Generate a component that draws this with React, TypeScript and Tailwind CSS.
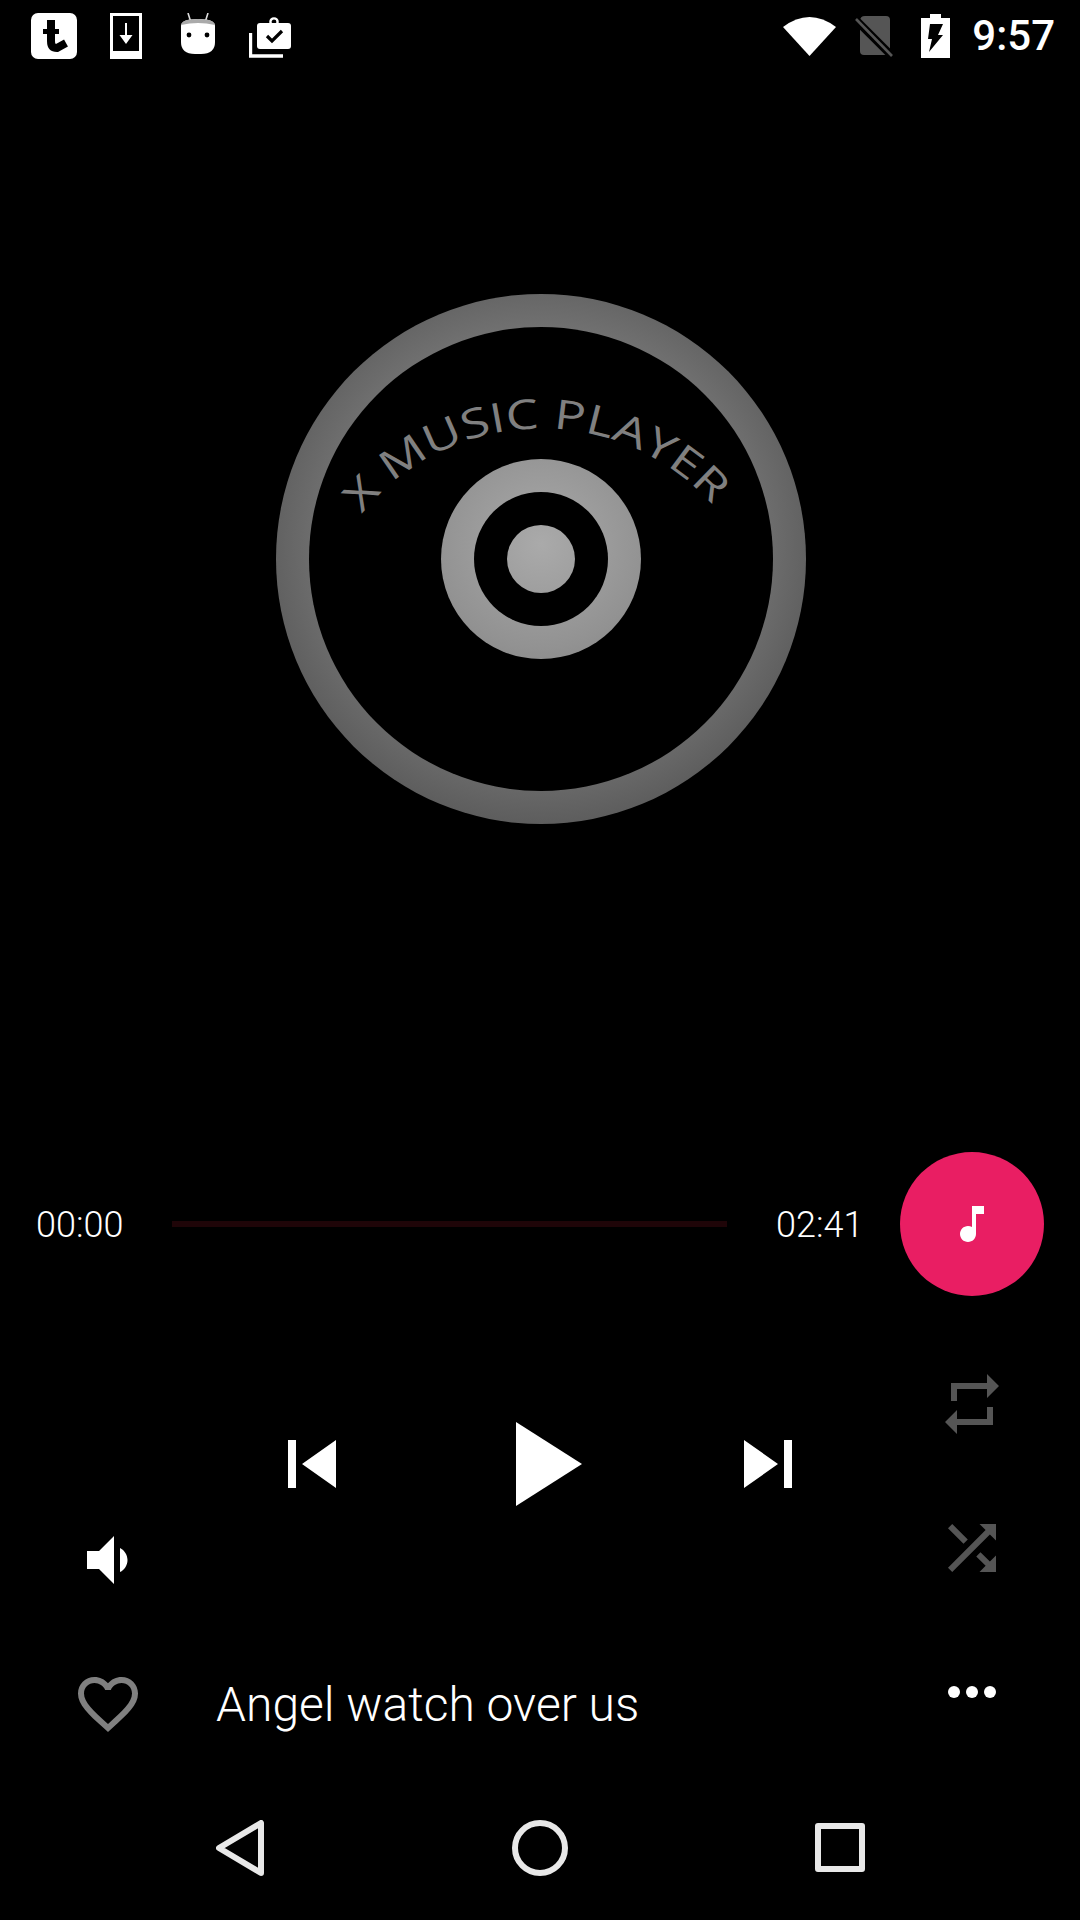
const roboto = "font-['Roboto',sans-serif]";

function MaterialIcon({ d, size, className }: { d: string; size: number; className: string }) {
  return (
    <svg viewBox="0 0 24 24" width={size} height={size} className={`shrink-0 ${className}`}>
      <path d={d} fill="currentColor" />
    </svg>
  );
}

function StatusBar() {
  return (
    <div className="flex h-[72px] w-full items-start">
      <svg viewBox="0 0 46 46" width={46} height={46} className="ml-[31px] mt-[13px] shrink-0">
        <rect width="46" height="46" rx="7" fill="#fff" />
        <path d="M20 7 V28 Q20 35 26 35 L35 30" fill="none" stroke="#000" strokeWidth="8" />
        <path d="M12 18.5 H28" stroke="#000" strokeWidth="5" />
      </svg>
      <svg viewBox="0 0 32 46" width={32} height={46} className="ml-[33px] mt-[13px] shrink-0">
        <rect x="1.5" y="1.5" width="29" height="43" fill="none" stroke="#fff" strokeWidth="3" />
        <rect y="38" width="32" height="8" fill="#fff" />
        <path d="M15 10 H17 V22 H22.5 L16 31 L9.5 22 H15 Z" fill="#fff" />
      </svg>
      <svg viewBox="0 0 34 42" width={34} height={42} className="ml-[39px] mt-[13px] shrink-0">
        <path d="M7 0 L9.5 8 M27 0 L24.5 8" stroke="#ddd" strokeWidth="1.6" fill="none" />
        <path d="M0 13 Q0 6 17 6 Q34 6 34 13 V29 Q34 41 20 41 H14 Q0 41 0 29 Z" fill="#fff" />
        <path d="M0 12 Q1 6 17 6 Q33 6 34 12 Q17 8 0 12 Z" fill="#aaa" />
        <circle cx="8" cy="22" r="2.4" fill="#000" />
        <circle cx="26" cy="22" r="2.4" fill="#000" />
      </svg>
      <svg viewBox="0 0 42 41" width={42} height={41} className="ml-[34px] mt-[17px] shrink-0">
        <path d="M1.5 16 V39 H34" fill="none" stroke="#fff" strokeWidth="3.4" />
        <rect x="8" y="6" width="34" height="26" rx="3" fill="#fff" />
        <circle cx="25" cy="5" r="3.6" fill="none" stroke="#fff" strokeWidth="2.4" />
        <path d="M18 19 L23 24 L33 14" fill="none" stroke="#000" strokeWidth="3.2" />
      </svg>
      <div className="ml-auto flex items-start">
        <svg viewBox="0 0 53 41" width={53} height={41} className="mt-[15px] shrink-0">
          <path d="M0 12 Q26.5 -8 53 12 L26.5 41 Z" fill="#fff" />
        </svg>
        <svg viewBox="0 0 39 41" width={39} height={41} className="ml-[19px] mt-[16px] shrink-0">
          <path d="M5 5 Q5 0 10 0 H31 Q35 0 35 4 V35 Q35 39 31 39 H9 Q5 39 5 35 Z" fill="#555" />
          <path d="M0 3 L36 39" stroke="#000" strokeWidth="8" />
          <path d="M1 3 L37 40" stroke="#555" strokeWidth="2.6" />
        </svg>
        <svg viewBox="0 0 29 44" width={29} height={44} className="ml-[27px] mt-[14px] shrink-0">
          <path d="M9 0 H20 V4 H29 V44 H0 V4 H9 Z" fill="#fff" />
          <path d="M9 10 H22 L17 21 H22 L8 38 L11 25 H7 Z" fill="#000" />
        </svg>
        <span className={`ml-[22px] mr-[25px] mt-[11px] text-[42px] font-medium leading-[50px] text-white ${roboto}`}>
          9:57
        </span>
      </div>
    </div>
  );
}

function Disc() {
  return (
    <div className="flex w-full justify-center pl-[2px] pt-[222px]">
      <svg viewBox="0 0 530 530" width={530} height={530} className="shrink-0">
        <defs>
          <radialGradient id="discFill" gradientUnits="userSpaceOnUse" cx="265" cy="250" r="290">
            <stop offset="0" stopColor="#aaaaaa" />
            <stop offset="0.36" stopColor="#929292" />
            <stop offset="0.8" stopColor="#6c6c6c" />
            <stop offset="1" stopColor="#5a5a5a" />
          </radialGradient>
          <path id="discLabel" d="M86 220 A230 230 0 0 1 444 220" />
        </defs>
        <circle cx="265" cy="265" r="265" fill="url(#discFill)" />
        <circle cx="265" cy="265" r="232" fill="#000" />
        <circle cx="265" cy="265" r="100" fill="url(#discFill)" />
        <circle cx="265" cy="265" r="67" fill="#000" />
        <circle cx="265" cy="265" r="34" fill="url(#discFill)" />
        <text fill="#808080" fontFamily="'Open Sans', sans-serif" fontSize="41" fontWeight="500">
          <textPath href="#discLabel" textLength="398" lengthAdjust="spacingAndGlyphs">
            X MUSIC PLAYER
          </textPath>
        </text>
      </svg>
    </div>
  );
}

function SeekRow() {
  return (
    <div className="mt-[328px] flex h-[144px] w-full items-center">
      <span className={`ml-[36px] mt-[2px] w-[136px] text-[36px] font-light leading-[44px] text-white ${roboto}`}>
        00:00
      </span>
      <div className="h-[6px] w-[555px] bg-[#1f0508]" />
      <span className={`ml-[49px] mt-[2px] w-[124px] text-[36px] font-light leading-[44px] text-white ${roboto}`}>
        02:41
      </span>
      <div className="flex h-[144px] w-[144px] items-center justify-center rounded-full bg-[#e91e63]">
        <MaterialIcon
          size={48}
          className="text-white"
          d="M12 3v10.55c-.59-.34-1.27-.55-2-.55-2.21 0-4 1.79-4 4s1.79 4 4 4 4-1.79 4-4V7h4V3h-6z"
        />
      </div>
    </div>
  );
}

function Controls() {
  return (
    <div className="flex w-full">
      <div className="w-[936px]">
        <div className="flex items-center gap-[108px] pl-[264px] pt-[96px]">
          <MaterialIcon size={96} className="text-white" d="M6 6h2v12H6zm3.5 6l8.5 6V6z" />
          <MaterialIcon size={144} className="text-white" d="M8 5v14l11-7z" />
          <MaterialIcon size={96} className="text-white" d="M6 18l8.5-6L6 6v12zM16 6v12h2V6h-2z" />
        </div>
        <div className="-mt-[12px] pl-[72px]">
          <MaterialIcon
            size={72}
            className="text-white"
            d="M18.5 12c0-1.77-1.02-3.29-2.5-4.03v8.05c1.48-.73 2.5-2.25 2.5-4.02zM5 9v6h4l5 5V4L9 9H5z"
          />
        </div>
      </div>
      <div className="flex flex-col gap-[72px] pt-[72px]">
        <MaterialIcon
          size={72}
          className="text-[#555555]"
          d="M7 7h10v3l4-4-4-4v3H5v6h2V7zm10 10H7v-3l-4 4 4 4v-3h12v-6h-2v4z"
        />
        <MaterialIcon
          size={72}
          className="text-[#555555]"
          d="M10.59 9.17L5.41 4 4 5.41l5.17 5.17 1.42-1.41zM14.5 4l2.04 2.04L4 18.59 5.41 20 17.96 7.46 20 9.5V4h-5.5zm.33 9.41l-1.41 1.41 3.13 3.13L14.5 20H20v-5.5l-2.04 2.04-3.13-3.13z"
        />
      </div>
    </div>
  );
}

function TrackRow() {
  return (
    <div className="mt-[72px] flex h-[72px] w-full items-center">
      <MaterialIcon
        size={72}
        className="ml-[72px] text-[#808080]"
        d="M16.5 3c-1.74 0-3.41.81-4.5 2.09C10.91 3.81 9.24 3 7.5 3 4.42 3 2 5.42 2 8.5c0 3.78 3.4 6.86 8.55 11.54L12 21.35l1.45-1.32C18.6 15.36 22 12.28 22 8.5 22 5.42 19.58 3 16.5 3zm-4.4 15.55l-.1.1-.1-.1C7.14 14.24 4 11.39 4 8.5 4 6.5 5.5 5 7.5 5c1.54 0 3.04.99 3.57 2.36h1.87C13.46 5.99 14.96 5 16.5 5c2 0 3.5 1.5 3.5 3.5 0 2.89-3.14 5.74-7.9 10.05z"
      />
      <span className={`ml-[72px] mt-[2px] text-[48px] font-light leading-[56px] text-white ${roboto}`}>
        Angel watch over us
      </span>
      <div className="ml-auto mr-[72px] -mt-[24px] flex h-[72px] w-[72px] items-center justify-center gap-[6px]">
        <div className="h-[12px] w-[12px] rounded-full bg-white" />
        <div className="h-[12px] w-[12px] rounded-full bg-white" />
        <div className="h-[12px] w-[12px] rounded-full bg-white" />
      </div>
    </div>
  );
}

function NavBar() {
  return (
    <div className="mt-[80px] flex h-[56px] w-full items-start">
      <svg viewBox="0 0 48 56" width={48} height={56} className="ml-[216px] shrink-0">
        <path d="M45 3 V53 L3 28 Z" fill="none" stroke="#e8e8e8" strokeWidth="6" strokeLinejoin="round" />
      </svg>
      <div className="ml-[248px] h-[56px] w-[56px] rounded-full border-[6px] border-[#e8e8e8]" />
      <div className="ml-[247px] mt-[3px] h-[49px] w-[50px] rounded-[3px] border-[6px] border-[#e8e8e8]" />
    </div>
  );
}

export default function App() {
  return (
    <div className="h-[1920px] w-[1080px] overflow-hidden bg-black">
      <StatusBar />
      <Disc />
      <SeekRow />
      <Controls />
      <TrackRow />
      <NavBar />
    </div>
  );
}
